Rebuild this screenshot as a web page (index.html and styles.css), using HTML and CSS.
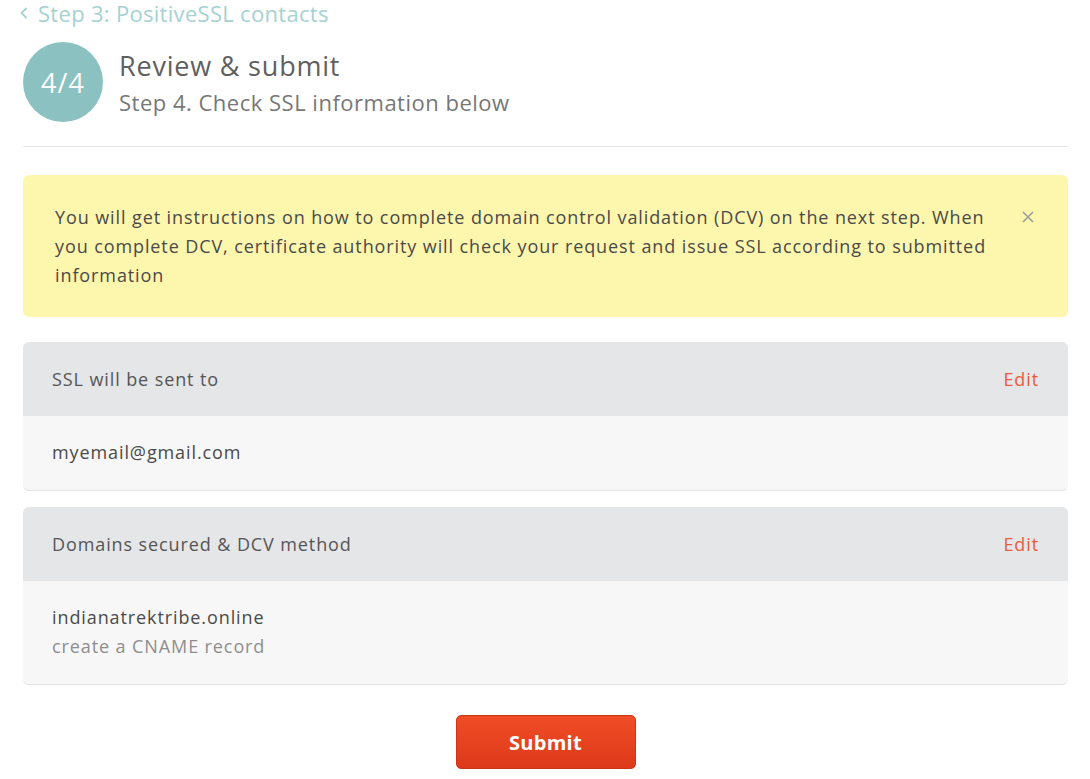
FILE: index.html
```html
<!DOCTYPE html>
<html lang="en">
<head>
<meta charset="utf-8">
<title>Review &amp; submit</title>
<link rel="stylesheet" href="styles.css">
</head>
<body>
<div class="page">
  <a class="back" href="#"><svg class="chev" width="10" height="14" viewBox="0 0 10 14"><path d="M7.5 2 L2.5 7 L7.5 12" fill="none" stroke="#a5d2d1" stroke-width="1.8"/></svg><span>Step 3: PositiveSSL contacts</span></a>
  <div class="step-head">
    <div class="badge">4/4</div>
    <div class="step-text">
      <h1 class="title">Review &amp; submit</h1>
      <p class="subtitle">Step 4. Check SSL information below</p>
    </div>
  </div>
  <hr class="divider">
  <div class="alert">
    <p class="alert-text">You will get instructions on how to complete domain control validation (DCV) on the next step. When you complete DCV, certificate authority will check your request and issue SSL according to submitted information</p>
    <svg class="close" width="12" height="12" viewBox="0 0 12 12"><path d="M1 1 L11 11 M11 1 L1 11" stroke="#9a9a9a" stroke-width="1.5"/></svg>
  </div>
  <section class="card">
    <div class="card-head"><span>SSL will be sent to</span><a class="edit" href="#">Edit</a></div>
    <div class="card-body"><div class="line">myemail@gmail.com</div></div>
  </section>
  <section class="card">
    <div class="card-head"><span>Domains secured &amp; DCV method</span><a class="edit" href="#">Edit</a></div>
    <div class="card-body">
      <div class="line">indianatrektribe.online</div>
      <div class="line muted">create a CNAME record</div>
    </div>
  </section>
  <div class="actions"><button class="submit">Submit</button></div>
</div>
</body>
</html>
```
FILE: styles.css
```css
* { box-sizing: border-box; }
html, body { margin: 0; padding: 0; background: #fff; }
body { font-family: "Open Sans", Lato, sans-serif; color: #4a4a4a; }
.page { padding: 0 22px 0 23px; }
.back { display: flex; align-items: center; gap: 9px; color: #a5d2d1; text-decoration: none; font-size: 22px; line-height: 26px; letter-spacing: 0.3px; margin-left: -4px; }
.chev { flex: none; }
.step-head { display: flex; align-items: center; margin-top: 16px; }
.badge { width: 80px; height: 80px; border-radius: 50%; background: #8bc2c1; color: #fff; font-size: 27px; letter-spacing: 1px; display: flex; align-items: center; justify-content: center; flex: none; }
.step-text { margin-left: 16px; }
.title { margin: 0; font-weight: 400; font-size: 27px; line-height: 32px; letter-spacing: 0.8px; color: #606060; }
.subtitle { margin: 8px 0 0; font-size: 22px; line-height: 24px; letter-spacing: 0.5px; color: #777; }
.divider { border: 0; border-top: 1px solid #e6e6e6; margin: 24px 0 28px; }
.alert { background: #fdf6ad; border-radius: 6px; padding: 28px 32px 27px 32px; display: flex; align-items: flex-start; }
.alert-text { margin: 0; flex: 1; font-size: 18px; line-height: 29px; letter-spacing: 0.9px; color: #4a4a4a; padding-right: 20px; }
.close { flex: none; margin-top: 8px; margin-right: 2px; }
.card { margin-top: 25px; border-radius: 6px; overflow: hidden; background: #f7f7f7; border-bottom: 1px solid #e3e3e3; }
.card + .card { margin-top: 16px; }
.card-head { background: #e5e6e8; height: 74px; display: flex; align-items: center; justify-content: space-between; padding: 0 29px; font-size: 18px; letter-spacing: 0.9px; color: #555; }
.edit { color: #f05a3a; text-decoration: none; }
.card-body { padding: 22px 29px 23px; font-size: 18px; line-height: 29px; letter-spacing: 0.9px; color: #4a4a4a; }
.muted { color: #8e8e8e; }
.actions { display: flex; justify-content: center; margin-top: 30px; }
.submit { width: 180px; height: 54px; border: 1px solid #c9361a; border-radius: 5px; background: linear-gradient(#f04c26, #dd3a1b); color: #fff; font-family: inherit; font-size: 20px; font-weight: 700; letter-spacing: 0.3px; }
```
